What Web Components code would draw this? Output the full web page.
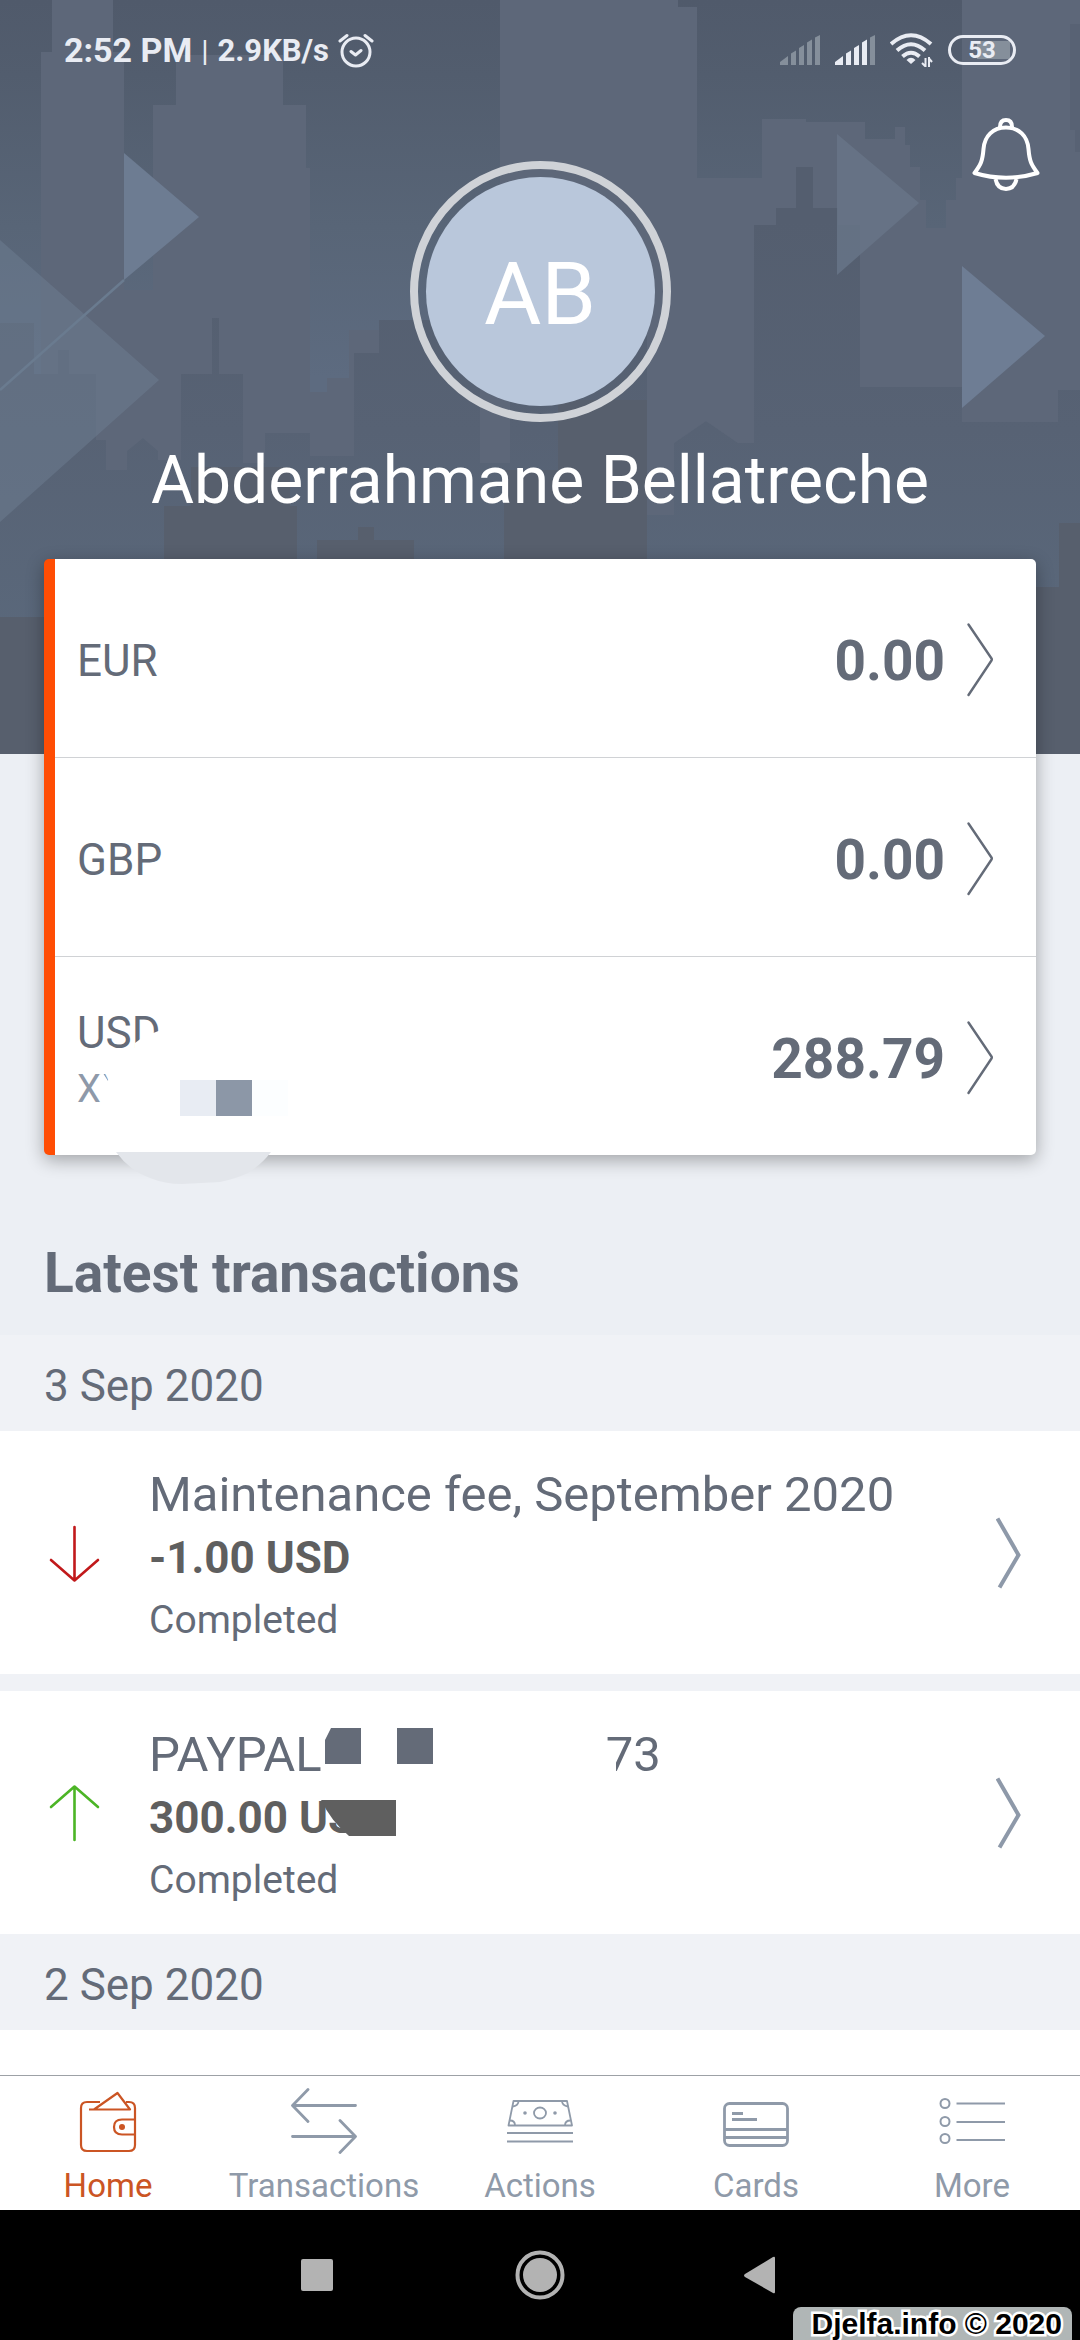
<!DOCTYPE html>
<html lang="en">
<head>
<meta charset="utf-8">
<meta name="viewport" content="width=device-width, initial-scale=1">
<title>Accounts</title>
<style>
  html, body { margin: 0; height: 100%; }
  body { font-family: Roboto, "Liberation Sans", sans-serif; background: #eceff4; color: #646b78; }
</style>
</head>
<body>
<wallet-app></wallet-app>

<script>
const define = (name, html) => customElements.define(name, class extends HTMLElement {
  constructor() {
    super();
    const t = document.createElement('template');
    t.innerHTML = typeof html === 'function' ? html(this) : html;
    this.attachShadow({ mode: 'open' }).append(t.content.cloneNode(true));
  }
});

/* City skyline drawn behind the profile header */
define('city-scene', `
<style>
  :host { display: block; overflow: hidden; }
  svg { display: block; width: 100%; height: 100%; }
</style>
<svg viewBox="0 0 1080 754" preserveAspectRatio="xMidYMid slice" aria-hidden="true">
  <defs>
    <linearGradient id="sky" x1="0" y1="0" x2="0" y2="1">
      <stop offset="0" stop-color="#505a6b"/><stop offset=".1" stop-color="#525d6e"/>
      <stop offset=".3" stop-color="#586577"/><stop offset=".5" stop-color="#5d6b80"/>
      <stop offset="1" stop-color="#5d6b80"/>
    </linearGradient>
    <linearGradient id="mid" gradientUnits="userSpaceOnUse" x1="0" y1="220" x2="0" y2="640">
      <stop offset="0" stop-color="#545e6f"/><stop offset=".5" stop-color="#576274"/>
      <stop offset="1" stop-color="#5a687b"/>
    </linearGradient>
  </defs>
  <path fill="url(#sky)" d="M0 0H1080V754H0z"/>
  <g fill="#5d6779">
    <path d="M52 0H113V52H124V600H41V52H52z"/>
    <path d="M124 290H160V600H124z"/>
    <path d="M176 55H283V105H306V168H310V392H327V378H349V330H380V600H153V105H176z"/>
    <path d="M500 0H678V7H697V178H762V119H806V122H865V139H895V127H905V145H910V167H920V200H926V228H946V200H956V178H962V0H1080V600H510V463H480V330H500z"/>
  </g>
  <path fill="#586274" d="M1070 24H1080V152H1075V130H1070z"/>
  <path fill="url(#mid)" d="M0 323H34V374H58V350H69V374H96V440H106V470H127V451L143 438 158 451V460H181V374H212V318H219V374H243V463H265V433H310V456H354V353H379V320H480V463H510V320H647V380H647V470H674V443L706 421 738 443V443H754V225H776V208H796V167H813V208H838V225H860V387H962V422H1058V390H1080V754H0z"/>
  <path fill="#5d6779" d="M647 360H752V443H738L706 421 674 443V515H647z"/>
  <path fill="#575f6d" d="M0 617H164V506H191V467H290V506H297V617H317V540H358V527H374V540H414V617H504V470H558V400H647V587H1059V523H1080V754H0z"/>
  <path fill="#6d7c92" d="M124 153 199 217 124 280z"/>
  <path fill="#6d7e92" fill-opacity=".5" d="M0 240 159 380 0 522z"/>
  <path fill="none" stroke="#6a7b8f" stroke-width="2.500" d="M124 280 0 390"/>
  <path fill="#677487" fill-opacity=".85" d="M837 134 919 203 837 275z"/>
  <path fill="#6e7d94" d="M962 266 1045 336 962 408z"/>
</svg>`);

define('status-bar', `
<style>
  :host { display: flex; align-items: center; justify-content: space-between; height: 100px; padding: 0 64px; color: #e9ecf3; font-weight: 700; }
  div { display: flex; align-items: center; }
  .l { gap: 9px; }
  .r { gap: 15px; }
  time { font-size: 34px; }
  .speed { font-size: 31px; }
  .sep { font-size: 30px; font-weight: 400; }
  svg { display: block; }
  .bat { box-sizing: border-box; width: 68px; height: 30px; border: 3px solid; border-radius: 15px; padding: 3px; font-size: 24px; line-height: 18px; justify-content: center; background: linear-gradient(#858f9b, #858f9b) 26px 3px / 33px 18px no-repeat; }
</style>
<div class="l">
  <time>2:52 PM</time><span class="sep">|</span><span class="speed">2.9KB/s</span>
  <svg width="36" height="36" viewBox="0 0 36 36" fill="none" stroke="currentColor" stroke-width="3" stroke-linecap="round" stroke-linejoin="round"><circle cx="18" cy="20" r="14"/><path d="M13 19.500 17.500 23 23 18.500M2 9 9 3.500M34 9 27 3.500"/></svg>
</div>
<div class="r">
  <svg width="40" height="30" viewBox="0 0 40 30" fill="#858f9b"><path d="M0 27 8 21V30H0zM11 18.500 16 15.500V30H11zM19 13 24 10V30H19zM27 7.500 32 4.500V30H27zM35 2.500 40 0V30H35z"/></svg>
  <svg width="40" height="30" viewBox="0 0 40 30" fill="currentColor"><path d="M0 27 8 21V30H0zM11 18.500 16 15.500V30H11zM19 13 24 10V30H19zM27 7.500 32 4.500V30H27z"/><path fill="#858f9b" d="M35 2.500 40 0V30H35z"/></svg>
  <svg width="43" height="34" viewBox="0 0 43 34" fill="none" stroke="currentColor" stroke-width="4"><path d="M1 11Q21 -6.500 41 11M7 17.500Q21 5 35 17.500M12.500 23.500Q21 16 29.500 23.500"/><path fill="currentColor" stroke="none" d="M21 31 16.500 27Q21 22.500 25.500 27z"/><path stroke-width="2" d="M35.500 25V34M39 34V24M32 30 35.500 33.500M42 29 39 25.500"/></svg>
  <div class="bat">53</div>
</div>`);

define('profile-header', `
<style>
  :host { display: block; position: relative; padding-bottom: 234px; color: #fff; }
  city-scene { position: absolute; inset: 0; }
  .body { position: relative; }
  .top { display: grid; grid-template-columns: 1fr auto 1fr; padding: 18px 40px 20px; }
  .avatar { grid-column: 2; margin-top: 43px; box-sizing: border-box; width: 261px; height: 261px; border: 8px solid #cfd2d7; border-radius: 50%; padding: 8px; display: grid; }
  .avatar span { display: grid; place-items: center; padding-top: 5px; border-radius: 50%; background: #b9c7db; font-size: 88px; line-height: 100px; }
  button { justify-self: end; align-self: start; border: 0; background: none; padding: 0; color: inherit; }
  button svg { display: block; }
  h1 { margin: 0; font-size: 66px; line-height: 78px; font-weight: 400; text-align: center; }
</style>
<city-scene></city-scene>
<div class="body">
  <status-bar></status-bar>
  <div class="top">
    <div class="avatar"><span><slot name="initials"></slot></span></div>
    <button aria-label="Notifications">
      <svg width="68" height="73" viewBox="0 0 68 73" fill="none" stroke="currentColor" stroke-width="4" stroke-linejoin="round"><path d="M34 9.500C21 9.500 12.500 18 11.500 31 10.500 43 9 46.500 2.500 55Q34 64.500 65.500 55C59 46.500 57.500 43 56.500 31 55.500 18 47 9.500 34 9.500z"/><path d="M28 9Q28 2 34 2T40 9M23.500 61Q25.500 71 34 71T44.500 61"/></svg>
    </button>
  </div>
  <h1><slot name="name"></slot></h1>
</div>`);

define('currency-row', `
<style>
  :host { display: block; position: relative; }
  :host(:not(:last-of-type)) { border-bottom: 1px solid #d0d2d5; }
  a { display: flex; align-items: center; gap: 22px; box-sizing: border-box; min-height: 198px; padding: 6px 43px 0 22px; color: #646b78; text-decoration: none; }
  .n { flex: 1; display: flex; flex-direction: column; gap: 7px; font-size: 44px; line-height: 52px; }
  ::slotted([slot=iban]) { font-size: 38px; line-height: 46px; color: #8e99a9; }
  b { font-size: 55px; line-height: 64px; }
  svg { display: block; flex: none; }
</style>
<a href="#account"><span class="n"><slot></slot><slot name="iban"></slot></span><b><slot name="amount"></slot></b><svg width="26" height="76" viewBox="0 0 26 76" fill="none" stroke="currentColor" stroke-width="2.400" stroke-linecap="round" stroke-linejoin="round" aria-hidden="true"><path d="M1.500 1.500 24.500 35.500q.7 1 0 2L1.500 72"/></svg></a>
<slot name="mask"></slot>`);

define('account-card', `
<style>
  :host { display: block; position: relative; margin: -195px 44px 0; background: #fff; border-left: 11px solid #ff4d04; border-radius: 5px; box-shadow: 0 5px 18px rgba(0,0,0,.32); }
</style><slot></slot>`);

define('date-band', `
<style>
  :host { display: block; padding: 25px 44px 19px; background: #f0f2f6; font-size: 44px; line-height: 52px; }
</style><slot></slot>`);

define('transaction-row', el => `
<style>
  :host { display: block; background: #fff; }
  :host([spaced]) { border-top: 17px solid #f0f2f6; }
  a { display: flex; align-items: center; gap: 45px; padding: 0 58px 0 44px; color: #646b78; text-decoration: none; }
  .t { flex: 1; position: relative; padding: 34px 0 25px; }
  .title { font-size: 49px; line-height: 60px; display: flex; }
  .amount { font-size: 44px; line-height: 66px; font-weight: 700; color: #5f5f5f; }
  .state { font-size: 39px; line-height: 58px; }
  svg { display: block; flex: none; }
  .chev { color: #8e99a9; }
</style>
<a href="#transaction">
  ${el.getAttribute('kind') === 'in'
    ? '<svg width="60" height="60" viewBox="0 0 60 60" fill="none" stroke="#4cb526" stroke-width="2.600" stroke-linecap="round" stroke-linejoin="round"><path d="M30.500 57V4M7 24 30.500 3.500 54 24"/></svg>'
    : '<svg width="60" height="60" viewBox="0 0 60 60" fill="none" stroke="#c1191b" stroke-width="2.600" stroke-linecap="round" stroke-linejoin="round"><path d="M30.500 4V57M7 37 30.500 57.500 54 37"/></svg>'}
  <div class="t">
    <div class="title"><slot name="title"></slot></div>
    <div class="amount"><slot name="amount"></slot></div>
    <div class="state"><slot name="state"></slot></div>
    <slot name="mask"></slot>
  </div>
  <svg class="chev" width="26" height="74" viewBox="0 0 26 74" fill="none" stroke="currentColor" stroke-width="4" aria-hidden="true"><path d="M1.500 2.500 22.500 39 3.500 71.500"/></svg>
</a>`);

define('tab-item', `
<style>
  :host { display: block; flex: 1 1 0; min-width: 0; }
  a { display: flex; flex-direction: column; align-items: center; gap: 12px; padding: 12px 0 4px; font-size: 33px; line-height: 40px; color: #8f9aa9; text-decoration: none; }
  :host([current]) a { color: #cb5524; }
</style>
<a href="#tab"><slot name="icon"></slot><span><slot></slot></span></a>`);

define('tab-bar', `
<style>
  :host { display: flex; background: #fff; border-top: 1px solid #9da1a6; }
  svg { display: block; width: 66px; height: 66px; fill: none; stroke: currentColor; stroke-linejoin: round; }
</style>
<tab-item current><svg slot="icon" viewBox="0 0 66 66" stroke-width="2.200"><path d="M25 14H12Q6 14 6 20V57Q6 63 12 63H54Q60 63 60 57V20Q60 14 54 14H51"/><path d="M14 21.500H55L42.500 5 19 21.500"/><path d="M60 31.500H47Q39 31.500 39 39T47 46.500H60"/><circle cx="47" cy="39" r="3" fill="currentColor" stroke="none"/></svg>Home</tab-item>
<tab-item><svg slot="icon" viewBox="0 0 66 66" stroke-width="2.800" stroke-linecap="round"><path d="M64.500 17.500H1.500L17 1.500M1.500 17.500 17 33.500M1.500 48.500H64.500L49 32.500M64.500 48.500 49 64.500"/></svg>Transactions</tab-item>
<tab-item><svg slot="icon" viewBox="0 0 66 66" stroke-width="1.800"><path d="M6.500 13H60L65 37.500H1.500zM0 45H66M0 53.500H66"/><ellipse cx="33" cy="25" rx="6" ry="5.500"/><path d="M11.500 13Q11.500 17.500 6 18.500M55 13Q55 17.500 61 18.500M8 37.500Q8 32.500 3 32.500M58 37.500Q58 32.500 63.500 32.500"/><circle cx="18" cy="25" r="1.800" fill="currentColor" stroke="none"/><circle cx="48" cy="25" r="1.800" fill="currentColor" stroke="none"/></svg>Actions</tab-item>
<tab-item><svg slot="icon" viewBox="0 0 66 66" stroke-width="2.800"><rect x="1.500" y="15.500" width="63" height="42" rx="5"/><path d="M1.500 41.500H64.500M1.500 49.500H64.500M9 25.500H20M9 31.500H34"/></svg>Cards</tab-item>
<tab-item><svg slot="icon" viewBox="0 0 66 66" stroke-width="2"><circle cx="6" cy="15.500" r="4.500"/><circle cx="6" cy="33.500" r="4.500"/><circle cx="6" cy="50.500" r="4.500"/><path d="M17.500 15.500H66M17.500 34H66M17.500 52H66"/></svg>More</tab-item>`);

define('system-bar', `
<style>
  :host { display: flex; align-items: center; justify-content: center; gap: 171px; height: 130px; background: #000; position: relative; }
  button { border: 0; padding: 0; background: none; color: #b3b3b3; }
  svg { display: block; fill: currentColor; }
  small { position: absolute; right: 8px; bottom: 0; padding: 0 10px 0 18px; border-radius: 8px 8px 0 0; background: #b0b6b6; color: #000; font: 700 30px/33px "Liberation Sans", sans-serif; white-space: nowrap; -webkit-text-stroke: 5px #fff; paint-order: stroke fill; }
</style>
<button aria-label="Recent apps"><svg width="50" height="50" viewBox="0 0 50 50"><rect x="7" y="9" width="32" height="32" rx="2"/></svg></button>
<button aria-label="Home"><svg width="50" height="50" viewBox="0 0 50 50"><circle cx="25" cy="25" r="22.500" fill="none" stroke="currentColor" stroke-width="4"/><circle cx="25" cy="25" r="17"/></svg></button>
<button aria-label="Back"><svg width="50" height="50" viewBox="0 0 50 50"><path d="M9 24 37 7Q39 6 39 8V42Q39 44 37 43L9 27Q7 25.500 9 24z"/></svg></button>
<small>Djelfa.info © 2020</small>`);

define('wallet-app', `
<style>
  :host { display: flex; flex-direction: column; height: 100vh; }
  main { flex: 1; min-height: 0; overflow: auto; scrollbar-width: none; display: flex; flex-direction: column; }
  main > * { flex: none; }
  h2 { margin: 0; padding: 86px 44px 30px; font-size: 55px; line-height: 64px; font-weight: 700; }
  .next { flex: 1; background: #fff; }
  .gap { display: block; flex: none; }
  svg[slot=mask] { position: absolute; left: 0; top: 0; overflow: visible; pointer-events: none; }
</style>
<main>
  <profile-header><span slot="initials">AB</span><span slot="name">Abderrahmane Bellatreche</span></profile-header>
  <account-card>
    <currency-row>EUR<span slot="amount">0.00</span></currency-row>
    <currency-row>GBP<span slot="amount">0.00</span></currency-row>
    <currency-row>USD<span slot="iban">XY</span><span slot="amount">288.79</span>
      <svg slot="mask" width="260" height="230" viewBox="0 0 260 230">
        <path fill="#fff" d="M80 86 88 80 106 73V100H80z"/>
        <path fill="#fff" d="M46 113 53 124 55 112H80V150H46z"/>
        <path fill="#e8ecf3" d="M125 123H161V159H125z"/><path fill="#8c97a7" d="M161 123H197V159H161z"/><path fill="#fcfeff" d="M197 123H233V159H197z"/>
        <path fill="#e3e6eb" d="M61 195H216Q207 207 193 216 180 222 165 225L127 227Q110 227 95 221 75 214 61 195z"/>
      </svg>
    </currency-row>
  </account-card>
  <h2>Latest transactions</h2>
  <date-band>3 Sep 2020</date-band>
  <transaction-row kind="out"><span slot="title">Maintenance fee, September 2020</span><span slot="amount">-1.00 USD</span><span slot="state">Completed</span></transaction-row>
  <transaction-row kind="in" spaced><span slot="title">PAYPAL</span><svg class="gap" slot="title" width="284" height="60" viewBox="0 0 284 60" fill="#646b78"><path d="M3 15 9 3H39V39H3zM75 3H111V39H75z"/></svg><span slot="title">73</span><span slot="amount">300.00 USD</span><span slot="state">Completed</span>
    <svg slot="mask" width="520" height="180" viewBox="0 0 520 180">
      <path fill="#5f5f5f" d="M172 109H247V145H200Q182 130 172 109z"/><path fill="#fff" d="M452 60H467V86H452z"/>
    </svg>
  </transaction-row>
  <date-band>2 Sep 2020</date-band>
  <div class="next"></div>
</main>
<tab-bar></tab-bar>
<system-bar></system-bar>`);
</script>
</body>
</html>
